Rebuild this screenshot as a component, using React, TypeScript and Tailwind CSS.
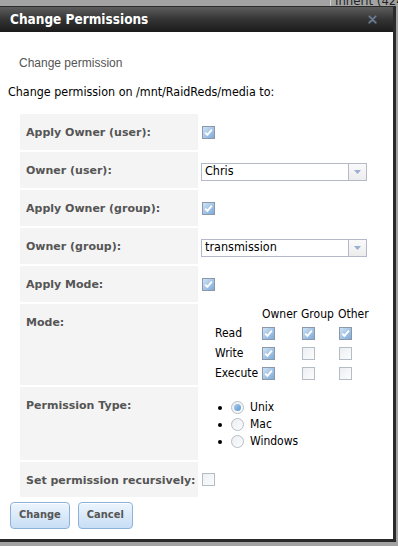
import React from "react";

const F = { fontFamily: '"DejaVu Sans Condensed", "DejaVu Sans", sans-serif' };
const FB = { fontFamily: '"DejaVu Sans", Verdana, sans-serif' };

function Cb({ checked = false }: { checked?: boolean }) {
  return (
    <span
      className={
        "inline-flex items-center justify-center w-[13px] h-[13px] border shrink-0 " +
        (checked
          ? "border-[#8a98aa] bg-gradient-to-br from-[#cfe2f5] to-[#7eaad8]"
          : "border-[#b4bcc6] bg-gradient-to-br from-[#eceff2] to-[#fbfcfd]")
      }
    >
      {checked && (
        <svg width="11" height="11" viewBox="0 0 11 11">
          <path d="M2.2 5.6 L4.4 7.9 L8.9 2.6" fill="none" stroke="#fff" strokeWidth="1.9" />
        </svg>
      )}
    </span>
  );
}

function Radio({ checked = false }: { checked?: boolean }) {
  return (
    <span className="inline-flex items-center justify-center w-[13px] h-[13px] rounded-full border border-[#b7bec7] bg-gradient-to-br from-[#eceff2] to-[#fbfcfd] shrink-0">
      {checked && <span className="w-[7px] h-[7px] rounded-full bg-gradient-to-br from-[#a9cbec] to-[#5e98cf]" />}
    </span>
  );
}

function Select({ value }: { value: string }) {
  return (
    <div className="flex w-[166px] h-[18px] border border-[#b5b8c8] bg-white">
      <div className="flex-1 flex items-center pl-[3px] text-[12.5px] text-black" style={F}>
        {value}
      </div>
      <div className="w-[18px] border-l border-[#b5b8c8] bg-gradient-to-b from-[#fafafa] to-[#ececec] flex items-center justify-center">
        <svg width="7" height="4" viewBox="0 0 7 4">
          <path d="M0 0 H7 L3.5 4 Z" fill="#9aaecf" />
        </svg>
      </div>
    </div>
  );
}

function Row({ label, h, children, valueClass = "" }: { label: string; h: string; children?: React.ReactNode; valueClass?: string }) {
  return (
    <div className={"flex gap-[2px] " + h}>
      <div className="w-[178px] shrink-0 bg-[#f4f4f4] pl-[6px] pt-[12px]">
        <span className="block text-[11px] leading-[13px] font-bold text-[#555] whitespace-nowrap" style={FB}>
          {label}
        </span>
      </div>
      <div className={"flex-1 " + valueClass}>{children}</div>
    </div>
  );
}

export default function App() {
  return (
    <div className="w-[398px] h-[546px] bg-[#a3a3a3] overflow-hidden flex flex-col" style={F}>
      {/* top strip */}
      <div className="h-[6px] shrink-0 relative overflow-hidden">
        <div className="absolute left-[330px] top-0 h-[6px] w-px bg-[#cfcfcf]" />
        <div className="absolute left-[335px] top-[-9px] text-[13px] text-[#222] whitespace-nowrap">Inherit (424)</div>
      </div>
      {/* dialog */}
      <div className="w-[396px] h-[536px] shrink-0 flex flex-col border-t border-r-[3px] border-b-[3px] border-[#2a2a2a] bg-white">
        <div className="h-[25px] shrink-0 flex items-center justify-between pl-[10px] pr-[16px] bg-gradient-to-b from-[#5e5e5e] via-[#343434] to-[#1b1b1b]">
          <span className="text-[13.5px] font-bold text-white" style={F}>
            Change Permissions
          </span>
          <svg width="9" height="9" viewBox="0 0 10 10">
            <path d="M1.5 1.5 L8.5 8.5 M8.5 1.5 L1.5 8.5" stroke="#4c5866" strokeWidth="2.8" strokeLinecap="round" />
            <path d="M1.5 1.5 L8.5 8.5 M8.5 1.5 L1.5 8.5" stroke="#72839a" strokeWidth="1.2" strokeLinecap="round" />
          </svg>
        </div>
        <div className="flex-1 flex flex-col">
          <div className="pt-[24px] pl-[19px] text-[12px] leading-[14px] text-[#555]" style={{ fontFamily: '"Liberation Sans", Arial, sans-serif' }}>
            Change permission
          </div>
          <div className="pt-[15px] pl-[8px] text-[12.4px] leading-[14px] text-black">
            Change permission on /mnt/RaidReds/media to:
          </div>
          <div className="mt-[15px] ml-[20px] mr-[2px] flex flex-col gap-[2px]">
            <Row label="Apply Owner (user):" h="h-[36px]" valueClass="flex items-center pl-[2px]">
              <Cb checked />
            </Row>
            <Row label="Owner (user):" h="h-[36px]" valueClass="flex items-center pl-[1px] pt-[3px]">
              <Select value="Chris" />
            </Row>
            <Row label="Apply Owner (group):" h="h-[36px]" valueClass="flex items-center pl-[2px]">
              <Cb checked />
            </Row>
            <Row label="Owner (group):" h="h-[36px]" valueClass="flex items-center pl-[1px] pt-[3px]">
              <Select value="transmission" />
            </Row>
            <Row label="Apply Mode:" h="h-[36px]" valueClass="flex items-center pl-[2px]">
              <Cb checked />
            </Row>
            <Row label="Mode:" h="h-[81px]" valueClass="pl-[15px] pt-[1px]">
              <div className="grid grid-cols-[47px_39px_37px_32px] grid-rows-[18px_20px_20px_20px] items-center text-[12px] leading-[16px] text-black">
                <div />
                <div>Owner</div>
                <div>Group</div>
                <div>Other</div>
                <div>Read</div>
                <div className="flex items-center"><Cb checked /></div>
                <div className="flex items-center pl-[1px]"><Cb checked /></div>
                <div className="flex items-center pl-[1px]"><Cb checked /></div>
                <div>Write</div>
                <div className="flex items-center"><Cb checked /></div>
                <div className="flex items-center pl-[1px]"><Cb /></div>
                <div className="flex items-center pl-[1px]"><Cb /></div>
                <div>Execute</div>
                <div className="flex items-center"><Cb checked /></div>
                <div className="flex items-center pl-[1px]"><Cb /></div>
                <div className="flex items-center pl-[1px]"><Cb /></div>
              </div>
            </Row>
            <Row label="Permission Type:" h="h-[73px]" valueClass="pl-[18px] pt-[12px]">
              <div className="flex flex-col text-[12px] leading-[17px] text-black">
                {[
                  ["Unix", true],
                  ["Mac", false],
                  ["Windows", false],
                ].map(([t, c]) => (
                  <div key={t as string} className="flex items-center">
                    <span className="w-[4px] h-[4px] rounded-full bg-black mr-[9px]" />
                    <Radio checked={c as boolean} />
                    <span className="ml-[6px]">{t as string}</span>
                  </div>
                ))}
              </div>
            </Row>
            <Row label="Set permission recursively:" h="h-[35px]" valueClass="flex items-center pl-[2px]">
              <Cb />
            </Row>
          </div>
          <div className="mt-[5px] ml-[10px] flex gap-[8px]">
            {["Change", "Cancel"].map((t) => (
              <button
                key={t}
                className="h-[27px] px-[8px] rounded-[4px] border border-[#8db2da] bg-gradient-to-b from-[#edf5fd] to-[#c7def5] text-[11px] font-bold text-[#555] shadow-[inset_0_1px_0_#fff]"
                style={F}
              >
                {t}
              </button>
            ))}
          </div>
        </div>
      </div>
    </div>
  );
}
